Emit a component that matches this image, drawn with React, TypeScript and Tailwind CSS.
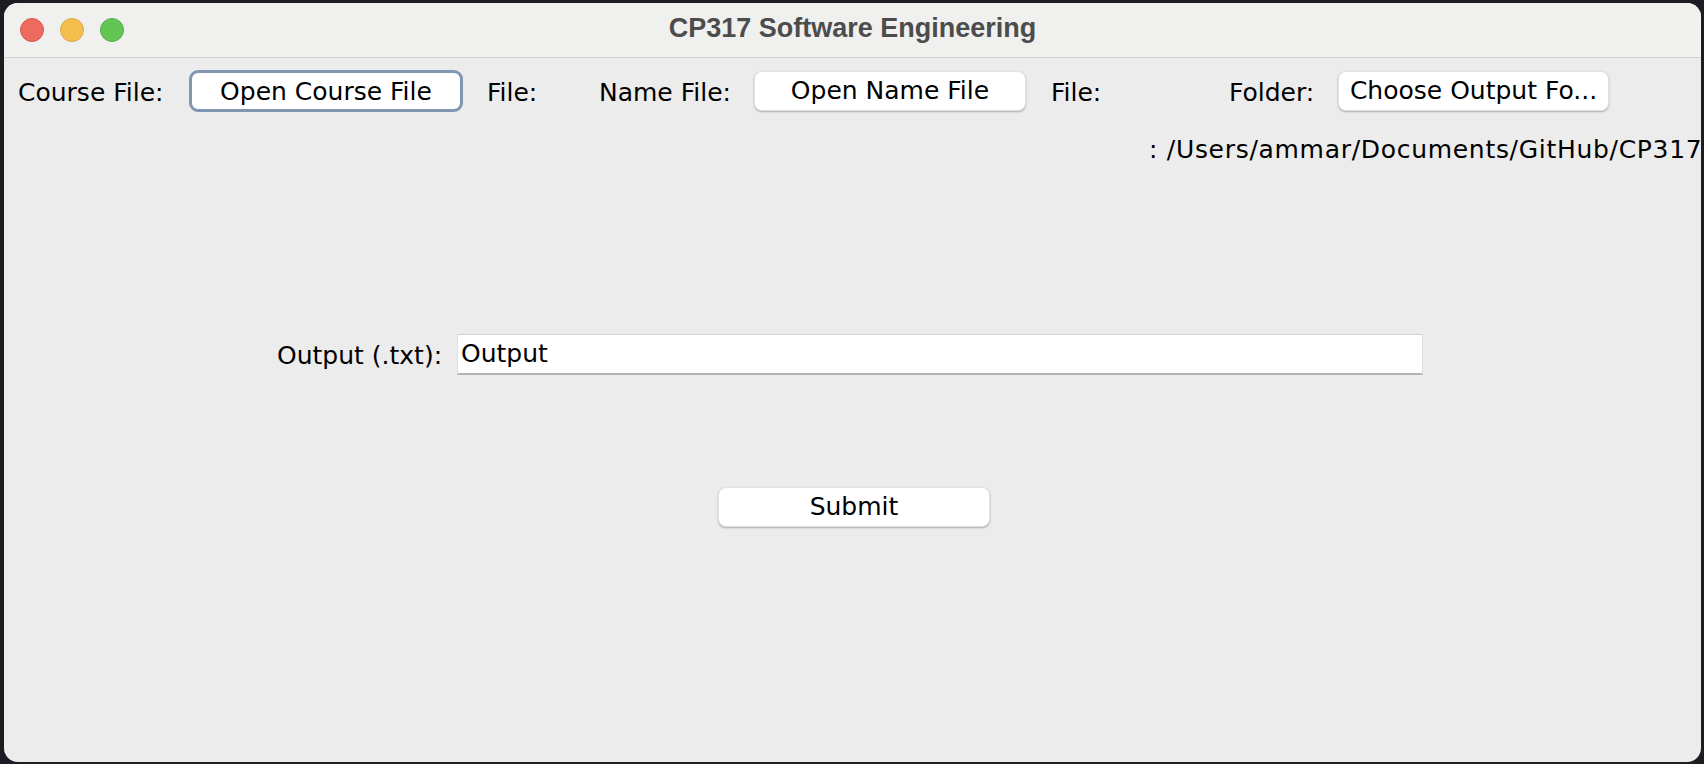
const font = { fontFamily: '"DejaVu Sans", "Liberation Sans", sans-serif' };

function TrafficLights() {
  return (
    <div className="flex items-center gap-[16px] pl-[16px]">
      <span className="w-[24px] h-[24px] rounded-full bg-[#ee6a5f] border border-[#d65a4f]" />
      <span className="w-[24px] h-[24px] rounded-full bg-[#f5bf50] border border-[#d9a646]" />
      <span className="w-[24px] h-[24px] rounded-full bg-[#62c554] border border-[#55ac47]" />
    </div>
  );
}

function MacButton({ label, width, focused }: { label: string; width: string; focused?: boolean }) {
  return (
    <button
      className={
        focused
          ? `${width} h-[42px] rounded-[9px] bg-white border-[3px] border-[#8196b1] text-black`
          : `${width} h-[40px] rounded-[8px] bg-white border border-[#e2e2e2] shadow-[0_1px_2px_rgba(0,0,0,0.28)] text-black`
      }
    >
      {label}
    </button>
  );
}

export default function App() {
  return (
    <div className="w-[1704px] h-[764px] bg-[#1c1d23] pl-[4px] pt-[3px] pr-[3px] pb-[2px]">
      <div
        className="w-full h-full rounded-[14px] overflow-hidden flex flex-col bg-[#ececec] text-[25px] text-black"
        style={font}
      >
        {/* title bar */}
        <div className="h-[55px] shrink-0 grid grid-cols-[1fr_auto_1fr] items-center bg-[#f0f0ef] border-b border-[#d2d2d2]">
          <TrafficLights />
          <div
            className="text-[27px] font-bold text-[#4c4c4c] pb-[4px]"
            style={{ fontFamily: '"Liberation Sans", Arial, sans-serif' }}
          >
            CP317 Software Engineering
          </div>
          <div />
        </div>

        {/* file row */}
        <div className="flex items-center h-[42px] mt-[12px] pl-[14px] whitespace-nowrap">
          <span className="w-[171px] pt-[3px]">Course File:</span>
          <MacButton label="Open Course File" width="w-[274px]" focused />
          <span className="ml-[24px] w-[112px] pt-[3px]">File:</span>
          <span className="w-[155px] pt-[3px]">Name File:</span>
          <MacButton label="Open Name File" width="w-[272px]" />
          <span className="ml-[25px] w-[178px] pt-[3px]">File:</span>
          <span className="w-[109px] pt-[3px]">Folder:</span>
          <MacButton label="Choose Output Fo..." width="w-[271px]" />
        </div>

        <div className="h-[30px] leading-[30px] mt-[23px] pl-[1145px] whitespace-nowrap tracking-[0.7px]">
          : /Users/ammar/Documents/GitHub/CP317
        </div>

        {/* output name */}
        <div className="flex items-center mt-[169px] pl-[273px]">
          <span className="w-[180px] pt-[2px]">Output (.txt):</span>
          <div className="w-[966px] h-[41px] bg-white border border-[#e0e0e0] border-t-[#d3d3d3] border-b-2 border-b-[#b4b4b4] flex items-center pl-[3px]">
            Output
          </div>
        </div>

        {/* submit */}
        <div className="flex mt-[112px] pl-[714px]">
          <MacButton label="Submit" width="w-[272px]" />
        </div>
      </div>
    </div>
  );
}
